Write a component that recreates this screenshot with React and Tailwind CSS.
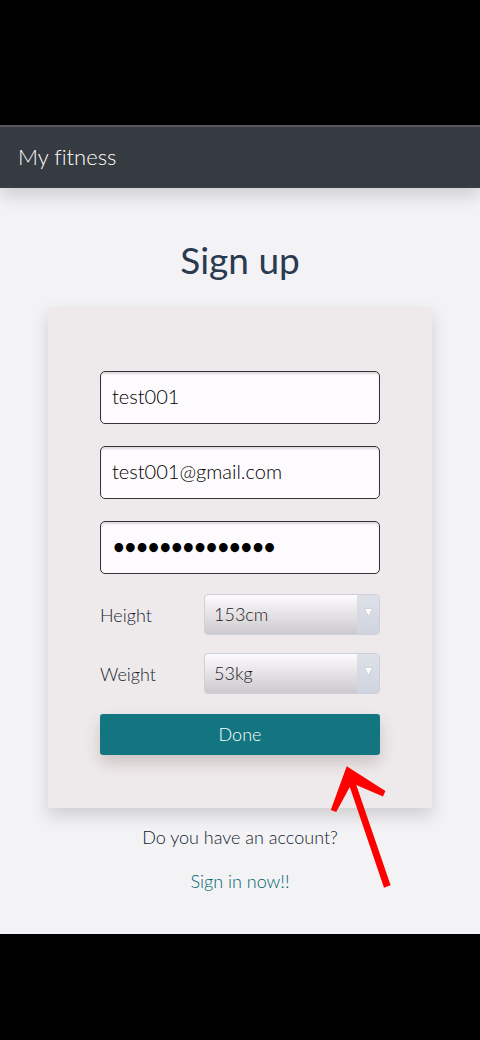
import { useState } from "react";

const fieldClass =
  "block w-full h-[53px] rounded-[5px] border border-[#33333a] bg-[#fdfbfd] pb-1 text-xl text-black shadow-[inset_0_2px_2px_rgba(0,0,0,0.13)] outline-none";

function SelectRow({ id, label, value, onChange, options }) {
  return (
    <div className="flex h-[41px] items-center">
      <label htmlFor={id} className="w-[104px] shrink-0 text-lg text-[#141c30]">
        {label}
      </label>
      <div className="relative h-full min-w-0 flex-1">
        <select
          id={id}
          value={value}
          onChange={(e) => onChange(e.target.value)}
          className="h-full w-full appearance-none rounded-[4px] border border-[#cbd0dc] bg-linear-to-b from-[#fdfbfd] to-[#cdcacd] pr-8 pb-0.5 pl-[9px] text-lg text-[#1f2024] outline-none"
        >
          {options.map((o) => (
            <option key={o}>{o}</option>
          ))}
        </select>
        <span className="pointer-events-none absolute inset-y-px right-px flex w-[22px] justify-center rounded-r-[3px] bg-linear-to-b from-[#dfe1e9] to-[#d0d4e0] pt-[13px]">
          <svg width="9" height="9" viewBox="0 0 9 9" aria-hidden="true">
            <path d="M0.5 0.5H8.5L4.5 8.5Z" fill="#fff" stroke="#bfc1c8" strokeWidth="0.6" />
          </svg>
        </span>
      </div>
    </div>
  );
}

export default function App() {
  const [name, setName] = useState("test001");
  const [email, setEmail] = useState("test001@gmail.com");
  const [password, setPassword] = useState("fitness-pass01");
  const [height, setHeight] = useState("153cm");
  const [weight, setWeight] = useState("53kg");

  return (
    <div className="min-h-screen bg-black py-[125px] pb-[106px] font-['Lato',sans-serif] font-light [font-variant-ligatures:none]">
      <div className="bg-[#f3f3f6] pb-[41px]">
        <header className="flex h-[63px] items-center border-t-2 border-[#5b575b] border-b border-b-[#34424f] bg-[#363a41] px-[18px] shadow-[0_8px_16px_rgba(0,0,0,0.15)]">
          <a href="#home" className="text-[22px] leading-8 text-white">
            My fitness
          </a>
        </header>
        <main>
          <h1 className="pt-12 text-center text-[37px] leading-[48px] font-normal text-[#2a3a50]">Sign up</h1>
          <form
            onSubmit={(e) => e.preventDefault()}
            className="relative mx-12 mt-[23px] bg-[#eeeaeb] px-[52px] pt-16 pb-[53px] shadow-[0_8px_16px_rgba(0,0,0,0.15)]"
          >
            <div className="flex flex-col gap-[22px]">
              <input
                type="text"
                aria-label="User name"
                value={name}
                onChange={(e) => setName(e.target.value)}
                className={`${fieldClass} px-[11px]`}
              />
              <input
                type="email"
                aria-label="Email"
                value={email}
                onChange={(e) => setEmail(e.target.value)}
                className={`${fieldClass} px-[11px]`}
              />
              <input
                type="password"
                aria-label="Password"
                value={password}
                onChange={(e) => setPassword(e.target.value)}
                className={`${fieldClass} px-3 font-bold`}
              />
            </div>
            <div className="mt-5 flex flex-col gap-[18px]">
              <SelectRow
                id="height"
                label="Height"
                value={height}
                onChange={setHeight}
                options={["152cm", "153cm", "154cm"]}
              />
              <SelectRow
                id="weight"
                label="Weight"
                value={weight}
                onChange={setWeight}
                options={["52kg", "53kg", "54kg"]}
              />
            </div>
            <button
              type="submit"
              className="mt-5 block h-[41px] w-full rounded-[3px] bg-[#137580] pb-0.5 text-lg text-white shadow-[0_8px_16px_rgba(60,20,20,0.18)]"
            >
              Done
            </button>
            <svg
              className="pointer-events-none absolute top-[459px] right-[41px]"
              width="61"
              height="122"
              viewBox="330 766 61 122"
              aria-hidden="true"
            >
              <path
                d="M346.7 766.3L385.4 791L383 796.5L356.3 785L390.6 885.3L384 887.7L349.8 787L336.2 812L330.8 810Z"
                fill="#ff0000"
              />
            </svg>
          </form>
          <p className="mt-[17px] text-center text-lg leading-6 text-[#141c30]">Do you have an account?</p>
          <p className="mt-5 text-center text-lg leading-6">
            <a href="#sign-in" className="text-[#00636c]">
              Sign in now!!
            </a>
          </p>
        </main>
      </div>
    </div>
  );
}
